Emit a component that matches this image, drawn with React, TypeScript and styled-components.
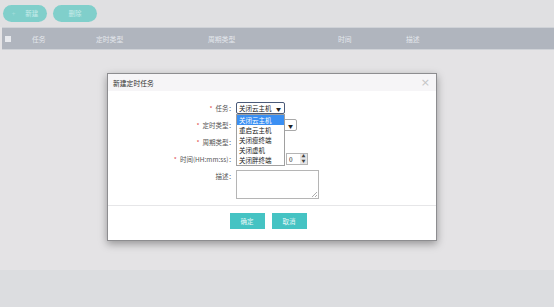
import React, { useState } from 'react'
import styled, { createGlobalStyle } from 'styled-components'

const GlobalStyle = createGlobalStyle`
  html, body {
    margin: 0;
    padding: 0;
    width: 554px;
    height: 307px;
    overflow: hidden;
    background: #dcdde0;
    font-family: "Noto Sans CJK SC", "Noto Sans", sans-serif;
  }
`

const Page = styled.div`
  position: relative;
  width: 554px;
  height: 307px;
  display: flex;
  flex-direction: column;
`

const Content = styled.div`
  height: 270px;
  background: #e4e3e5;
  display: flex;
  flex-direction: column;
`

const Toolbar = styled.div`
  height: 26px;
  background: #e0e0e2;
  display: flex;
  align-items: center;
  gap: 6px;
  padding: 0 3px;
  padding-bottom: 1px;
`

const PillButton = styled.button`
  width: 44px;
  height: 17px;
  border: none;
  border-radius: 9px;
  background: #80cfcb;
  color: #c9ecea;
  font-family: inherit;
  font-size: 6.5px;
  padding: 0;
  display: flex;
  align-items: center;
  justify-content: center;
  gap: 10px;
`

const HeadRow = styled.div`
  margin: 0 0 0 2px;
  height: 21px;
  border-top: 1px solid #cfd2d7;
  border-bottom: 1px solid #cfd2d7;
  background: #b0b5be;
  display: grid;
  grid-template-columns: 30px 64px 112px 130px 68px 1fr;
  align-items: center;
  color: #e4e7ec;
  font-size: 6.8px;
`

const HeadCell = styled.div`
  white-space: nowrap;
`

const Check = styled.span`
  display: block;
  width: 6px;
  height: 6px;
  margin-left: 3px;
  background: #e8eaee;
`

const Backdrop = styled.div`
  position: absolute;
  inset: 0;
`

const Modal = styled.div`
  position: absolute;
  left: 107px;
  top: 73px;
  width: 330px;
  height: 168px;
  background: #ffffff;
  border: 1px solid #8d8d90;
  box-sizing: border-box;
  box-shadow: 0 3px 8px rgba(0, 0, 0, 0.35);
  display: flex;
  flex-direction: column;
`

const ModalHead = styled.div`
  height: 17px;
  background: #f6f5f7;
  display: flex;
  align-items: center;
  justify-content: space-between;
  padding: 0 6px 0 5px;
  font-size: 6.8px;
  color: #333;
`

const Close = styled.span`
  color: #c4c4c6;
  font-size: 11px;
  line-height: 1;
  font-family: "DejaVu Sans", sans-serif;
`

const Form = styled.div`
  flex: 1;
  display: grid;
  grid-template-columns: 128px 1fr;
  grid-auto-rows: min-content;
  row-gap: 5px;
  padding-top: 11px;
  font-size: 6.5px;
  color: #555;
`

const Label = styled.div`
  text-align: right;
  height: 12px;
  line-height: 12px;
  white-space: nowrap;
  padding-right: 1px;
`

const Star = styled.span`
  color: #e04848;
  margin-right: 3px;
`

const Field = styled.div`
  position: relative;
  display: flex;
  gap: 3px;
  height: 12px;
`

const Select = styled.div<{ $w: number; $focus?: boolean }>`
  width: ${(p) => p.$w}px;
  height: 12px;
  box-sizing: border-box;
  border: 1px solid ${(p) => (p.$focus ? '#4a5a78' : '#a9a9a9')};
  border-radius: 2px;
  background: #fff;
  display: flex;
  align-items: center;
  justify-content: space-between;
  padding: 0 3px 0 2px;
  color: #222;
  font-size: 6.5px;
  white-space: nowrap;
`

const Arrow = styled.span`
  font-size: 5px;
  color: #222;
`

const Menu = styled.ul`
  position: absolute;
  left: 0;
  top: 12px;
  width: 49px;
  margin: 0;
  padding: 0;
  list-style: none;
  background: #fff;
  border: 1px solid #a0a0a0;
  box-sizing: border-box;
  z-index: 2;
`

const Option = styled.li<{ $active?: boolean }>`
  height: 10px;
  line-height: 10px;
  padding-left: 2px;
  font-size: 6.5px;
  white-space: nowrap;
  overflow: hidden;
  color: ${(p) => (p.$active ? '#fff' : '#222')};
  background: ${(p) => (p.$active ? '#3a8ff3' : 'transparent')};
`

const NumBox = styled.div`
  width: 22px;
  height: 12px;
  box-sizing: border-box;
  border: 1px solid #b5b5b5;
  background: #fff;
  display: flex;
  align-items: center;
  justify-content: space-between;
  padding-left: 2px;
  color: #222;
  font-size: 6.5px;
`

const Spin = styled.span`
  width: 7px;
  height: 10px;
  background: #e6e6e6;
  font-size: 4px;
  line-height: 5px;
  text-align: center;
  color: #444;
`

const TextArea = styled.div`
  width: 83px;
  height: 29px;
  box-sizing: border-box;
  border: 1px solid #b5b5b5;
  position: relative;
`

const Grip = styled.svg`
  position: absolute;
  right: 1px;
  bottom: 1px;
`

const Footer = styled.div`
  height: 35px;
  border-top: 1px solid #e6e6e8;
  display: flex;
  justify-content: center;
  gap: 7px;
  padding-top: 7px;
  padding-right: 8px;
  box-sizing: border-box;
`

const ActionButton = styled.button`
  width: 35px;
  height: 16px;
  border: none;
  background: #45c3c3;
  color: #e8f8f8;
  font-family: inherit;
  font-size: 6.5px;
  padding: 0;
`

const tasks = ['关闭云主机', '重启云主机', '关闭瘦终端', '关闭虚机', '关闭胖终端']

function App() {
  const [selected] = useState(0)

  return (
    <>
      <GlobalStyle />
      <Page>
        <Content>
          <Toolbar>
            <PillButton>
              <span style={{ opacity: 0.5 }}>+</span>
              <span>新建</span>
            </PillButton>
            <PillButton>删除</PillButton>
          </Toolbar>
          <HeadRow>
            <HeadCell>
              <Check />
            </HeadCell>
            <HeadCell>任务</HeadCell>
            <HeadCell>定时类型</HeadCell>
            <HeadCell>周期类型</HeadCell>
            <HeadCell>时间</HeadCell>
            <HeadCell>描述</HeadCell>
          </HeadRow>
        </Content>

        <Backdrop>
          <Modal>
            <ModalHead>
              <span>新建定时任务</span>
              <Close>×</Close>
            </ModalHead>
            <Form>
              <Label>
                <Star>*</Star>任务：
              </Label>
              <Field>
                <Select $w={49} $focus>
                  <span>{tasks[selected]}</span>
                  <Arrow>▼</Arrow>
                </Select>
                <Menu>
                  {tasks.map((t, i) => (
                    <Option key={t} $active={i === selected}>
                      {t}
                    </Option>
                  ))}
                </Menu>
              </Field>

              <Label>
                <Star>*</Star>定时类型：
              </Label>
              <Field>
                <Select $w={61}>
                  <span>每天</span>
                  <Arrow>▼</Arrow>
                </Select>
              </Field>

              <Label>
                <Star>*</Star>周期类型：
              </Label>
              <Field />

              <Label>
                <Star>*</Star>时间(HH:mm:ss)：
              </Label>
              <Field>
                <NumBox>
                  0<Spin>▲<br />▼</Spin>
                </NumBox>
                <NumBox>
                  0<Spin>▲<br />▼</Spin>
                </NumBox>
                <NumBox>
                  0<Spin>▲<br />▼</Spin>
                </NumBox>
              </Field>

              <Label>描述：</Label>
              <Field>
                <TextArea>
                  <Grip width="6" height="6" viewBox="0 0 6 6">
                    <path d="M6 1 L1 6 M6 4 L4 6" stroke="#999" strokeWidth="0.8" />
                  </Grip>
                </TextArea>
              </Field>
            </Form>
            <Footer>
              <ActionButton>确定</ActionButton>
              <ActionButton>取消</ActionButton>
            </Footer>
          </Modal>
        </Backdrop>
      </Page>
    </>
  )
}

export default App
